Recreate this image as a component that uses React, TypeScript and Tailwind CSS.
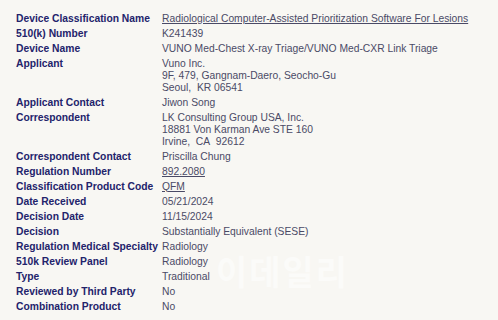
import React from 'react';

type Row = {
  label: string;
  value: string[];
  link?: boolean;
};

// device record rows, as listed on the 510(k) detail page
const rows: Row[] = [
  { label: 'Device Classification Name', value: ['Radiological Computer-Assisted Prioritization Software For Lesions'], link: true },
  { label: '510(k) Number', value: ['K241439'] },
  { label: 'Device Name', value: ['VUNO Med-Chest X-ray Triage/VUNO Med-CXR Link Triage'] },
  { label: 'Applicant', value: ['Vuno Inc.', '9F, 479, Gangnam-Daero, Seocho-Gu', 'Seoul,\u00a0\u00a0KR 06541'] },
  { label: 'Applicant Contact', value: ['Jiwon Song'] },
  { label: 'Correspondent', value: ['LK Consulting Group USA, Inc.', '18881 Von Karman Ave STE 160', 'Irvine,\u00a0\u00a0CA\u00a0 92612'] },
  { label: 'Correspondent Contact', value: ['Priscilla Chung'] },
  { label: 'Regulation Number', value: ['892.2080'], link: true },
  { label: 'Classification Product Code', value: ['QFM'], link: true },
  { label: 'Date Received', value: ['05/21/2024'] },
  { label: 'Decision Date', value: ['11/15/2024'] },
  { label: 'Decision', value: ['Substantially Equivalent (SESE)'] },
  { label: 'Regulation Medical Specialty', value: ['Radiology'] },
  { label: '510k Review Panel', value: ['Radiology'] },
  { label: 'Type', value: ['Traditional'] },
  { label: 'Reviewed by Third Party', value: ['No'] },
  { label: 'Combination Product', value: ['No'] },
];

export default function App() {
  return (
    <div
      className="relative w-[498px] h-[320px] overflow-hidden bg-[#f8f7f3] pt-[11px] pl-[16px] text-[10.3px] leading-[12px]"
      style={{ fontFamily: '"Liberation Sans", Arial, sans-serif' }}
    >
      <div className="flex flex-col">
        {rows.map((row) => (
          <div key={row.label} className="flex py-[1.5px]">
            <div className="w-[146px] shrink-0 font-bold text-[#23236b] whitespace-nowrap">{row.label}</div>
            <div className="flex flex-col text-[#4a4a66] whitespace-nowrap">
              {row.value.map((line, i) => (
                <span key={i} className={row.link ? 'underline' : ''}>
                  {line}
                </span>
              ))}
            </div>
          </div>
        ))}
      </div>

      {/* faint news watermark over the lower rows */}
      <div
        className="absolute left-[216px] top-[254px] text-[34px] font-bold leading-none text-white opacity-50 tracking-[2px]"
        style={{ fontFamily: '"Noto Sans CJK KR", sans-serif' }}
      >
        이데일리
      </div>
    </div>
  );
}
